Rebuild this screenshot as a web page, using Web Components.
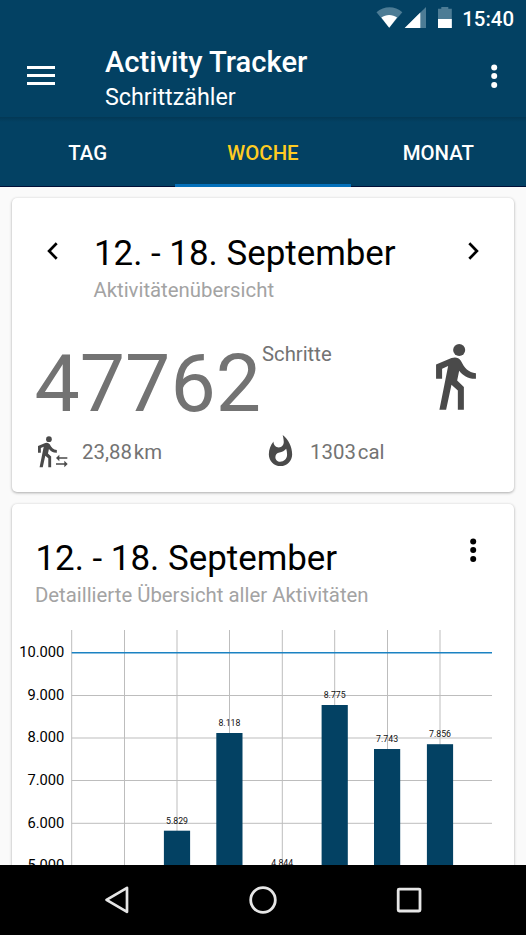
<!DOCTYPE html>
<html lang="de">
<head>
<meta charset="utf-8">
<title>Activity Tracker</title>
<style>
html,body{margin:0;height:100%;overflow:hidden}
body{font-family:Roboto,"Noto Sans",sans-serif;background:#fafafa}
</style>
</head>
<body>
<activity-app></activity-app>
<script>
const define = (name, css, html) => customElements.define(name, class extends HTMLElement {
  connectedCallback() {
    if (this.shadowRoot) return;
    const t = document.createElement('template');
    t.innerHTML = `<style>*{box-sizing:border-box}svg{display:block}${css}</style>${typeof html === 'function' ? html(this) : html}`;
    this.attachShadow({mode: 'open'}).append(t.content.cloneNode(true));
  }
});

define('status-bar', `:host{display:flex;justify-content:flex-end;height:36px;padding:0 12px 0 0;align-items:flex-start;color:#fff}
svg{flex:none}span{font:500 20.4px/24px Roboto,sans-serif;margin:6.5px 0 0 9px}`,
`<svg width="77" height="36" viewBox="0 0 77 36">
<path d="M0.5 12.3C8 5.6 19 5.6 26.3 12.3L13.2 27.7Z" fill="#4d7c95"/>
<path d="M5.3 17.5C9.8 14 16.6 14 21.1 17.5L13.2 27.7Z" fill="#fff"/>
<path d="M28.7 28L50 7V28Z" fill="#4d7c95"/><path d="M28.7 28L44.3 12.6V28Z" fill="#fff"/>
<path d="M62 8.7h3.3V7h7v1.7h3.5V28H62Z" fill="#4d7c95"/><path d="M62 19h13.8v9H62Z" fill="#fff"/></svg><span>15:40</span>`);

define('more-icon', `:host{display:block;width:8px;height:26px}`,
`<svg width="8" height="26" fill="currentColor"><circle cx="4.2" cy="4.4" r="3"/><circle cx="4.2" cy="13.1" r="3"/><circle cx="4.2" cy="21.9" r="3"/></svg>`);

define('tool-bar', `:host{display:flex;height:81px;padding:8px 28px 0 27px;color:#fff;align-items:flex-start}
.menu{margin-top:22px;flex:none}.t{margin-left:50px;flex:1}
h1{margin:0;font-weight:500;font-size:29.15px;line-height:36px;white-space:nowrap}
p{margin:4px 0 0;font-size:23.3px;line-height:26px}more-icon{margin-top:19px}`,
`<svg class="menu" width="28" height="20" fill="#fff"><path d="M0 0h28v3H0zM0 8h28v3H0zM0 16h28v3H0z"/></svg>
<div class="t"><h1><slot name="title"></slot></h1><p><slot name="subtitle"></slot></p></div><more-icon></more-icon>`);

define('tab-item', `:host{display:flex;align-items:center;justify-content:center;flex:1;height:70px;padding-top:3px;color:#fff;font-weight:500;font-size:20.4px;line-height:24px;border-bottom:1px solid #001038}
:host([selected]){color:#fc2;border-bottom:3px solid #0470ba;padding-top:5px}`, `<slot></slot>`);

define('tab-strip', `:host{display:flex;height:70px;background:linear-gradient(#033855,#034163 5px)}`, `<slot></slot>`);

define('info-card', `:host{display:block;background:#fff;border-radius:5px;box-shadow:0 1px 3px rgba(0,0,0,.3),0 0 3px rgba(0,0,0,.05)}`, `<slot></slot>`);

define('card-heading', `:host{display:block;flex:1}
h2{margin:0;padding-top:1px;font-weight:400;font-size:34.9px;line-height:42px;color:#000;white-space:nowrap}
p{margin:3px 0 0 -.6px;font-size:20.35px;line-height:24px;color:#a3a3a3;white-space:nowrap}`,
`<h2><slot name="title"></slot></h2><p><slot name="subtitle"></slot></p>`);

define('chevron-icon', `:host{display:block;width:11px;height:18px}:host([right]){transform:scaleX(-1)}`,
`<svg width="11" height="18"><path d="M9.7 1.2L2.1 9L9.7 16.8" fill="none" stroke="#000" stroke-width="2.7"/></svg>`);

const walker = `<circle cx="588" cy="390" r="18"/><path d="M519 433L565 414Q583 408 593 422C604 444 615 457 638 459V476C615 477 599 466 588 452L582 481L602 500V568H584V511L565 494L549 568H529L555 438L537 446V476H519Z"/>`;
define('walk-icon', `:host{display:block}`, `<svg width="40" height="66" viewBox="519 372 119 197" fill="#4a4a4a">${walker}</svg>`);
define('distance-icon', `:host{display:block}`, `<svg width="31" height="32" viewBox="0 0 93 96" fill="#4a4a4a"><g transform="scale(.475) translate(-519 -370)">${walker}</g>
<path d="M54 66L64 56V63.5H88V68.5H64V76ZM89 84L79 74V81.5H54V86.5H79V94Z"/></svg>`);
define('flame-icon', `:host{display:block}`, `<svg width="35" height="35" viewBox="0 0 24 24" fill="#4a4a4a"><path d="M13.5.67s.74 2.65.74 4.8c0 2.06-1.35 3.73-3.41 3.73-2.07 0-3.63-1.67-3.63-3.73l.03-.36C5.21 7.51 4 10.62 4 14c0 4.42 3.58 8 8 8s8-3.58 8-8C20 8.61 17.41 3.8 13.5.67zM11.71 19c-1.78 0-3.22-1.4-3.22-3.14 0-1.62 1.05-2.76 2.81-3.12 1.77-.36 3.6-1.21 4.62-2.58.39 1.29.59 2.65.59 4.04 0 2.65-2.15 4.8-4.8 4.8z"/></svg>`);

define('week-summary', `:host{display:block;height:294px;color:#737373}
.head{display:flex;padding:34px 35px 0}.head card-heading{margin-left:36px}chevron-icon{margin-top:10px}
.steps{display:flex;padding:35px 38px 0 22.5px;height:128px}
b{font-weight:400;font-size:80.6px;line-height:94px;margin-top:0}
.unit{font-size:20.3px;line-height:24px;margin:5px 0 0 1px;flex:1}walk-icon{margin-top:7px}
.stats{display:grid;grid-template-columns:44px 181px 47px 1fr;padding:0 26px;font-size:20.4px;line-height:24px}
.stats span{margin-top:10px;white-space:nowrap}i{font-style:normal;margin-left:2px}
distance-icon{margin-top:6px}flame-icon{margin-top:4px}`,
`<div class="head"><chevron-icon></chevron-icon><card-heading><span slot="title">12. - 18. September</span><span slot="subtitle">Aktivitätenübersicht</span></card-heading><chevron-icon right></chevron-icon></div>
<div class="steps"><b>47762</b><span class="unit">Schritte</span><walk-icon></walk-icon></div>
<div class="stats"><distance-icon></distance-icon><span>23,88<i>km</i></span><flame-icon></flame-icon><span>1303<i>cal</i></span></div>`);

define('step-chart', `:host{display:block}svg{font-family:Roboto,sans-serif}`, () => {
  // Chart coordinates: card origin at x = 12, plot top at y = 630.
  let s = '<svg width="502" height="260" viewBox="12 630 502 260">';
  [71.7,124.5,177,229.5,282.3,334.7,387.5,440].forEach(x => s += `<path d="M${x} 630V890" stroke="#bdbdbd"/>`);
  [[652.8,'10.000'],[695.5,'9.000'],[738,'8.000'],[780.5,'7.000'],[823.3,'6.000'],[866,'5.000']].forEach(([y,t],i) => {
    s += `<path d="M71.7 ${y}H492" stroke="${i ? '#bdbdbd' : '#1b82c2'}" stroke-width="${i ? 1 : 1.4}"/><text x="64.3" y="${y+4.3}" font-size="14.7" text-anchor="end">${t}</text>`;
  });
  [[177,830.7,'5.829'],[229.4,733,'8.118'],[282.2,873,'4.844'],[334.7,705,'8.775'],[387.1,749,'7.743'],[440,744.2,'7.856']].forEach(([x,y,t]) =>
    s += `<rect x="${x-13.1}" y="${y}" width="26.2" height="${890-y}" fill="#034163"/><text x="${x}" y="${y-6.8}" font-size="8.76" text-anchor="middle" fill="#111">${t}</text>`);
  return s + '</svg>';
});

define('week-details', `:host{display:block}.head{display:flex;padding:33px 37px 0 23.5px}more-icon{margin-top:0}step-chart{margin-top:23px}`,
`<div class="head"><card-heading><span slot="title">12. - 18. September</span><span slot="subtitle">Detaillierte Übersicht aller Aktivitäten</span></card-heading><more-icon></more-icon></div><step-chart></step-chart>`);

define('nav-bar', `:host{display:grid;grid-template-columns:repeat(3,146px);justify-content:center;align-items:center;justify-items:center;height:70px;background:#000}`,
`<svg width="30" height="30"><path d="M25 3L4.5 15L25 27Z" transform="translate(0 -.2)" fill="none" stroke="#e6e6e6" stroke-width="2.7" stroke-linejoin="round"/></svg>
<svg width="30" height="30"><circle cx="15" cy="15" r="12.3" fill="none" stroke="#e6e6e6" stroke-width="2.8"/></svg>
<svg width="30" height="30"><rect x="4.2" y="4.2" width="21.8" height="21.8" rx="1" fill="none" stroke="#e6e6e6" stroke-width="2.8"/></svg>`);

define('activity-app', `:host{display:flex;flex-direction:column;height:935px;width:526px;overflow:hidden}
header{background:#034163;height:117px;flex:none}tab-strip,nav-bar{flex:none}
main{flex:1;min-height:0;overflow:hidden;display:flex;flex-direction:column;gap:12px;padding:11px 12px 0}info-card{flex:none}`,
`<header><status-bar></status-bar><tool-bar><span slot="title">Activity Tracker</span><span slot="subtitle">Schrittzähler</span></tool-bar></header>
<tab-strip><tab-item>TAG</tab-item><tab-item selected>WOCHE</tab-item><tab-item>MONAT</tab-item></tab-strip>
<main><info-card><week-summary></week-summary></info-card><info-card><week-details></week-details></info-card></main><nav-bar></nav-bar>`);
</script>
</body>
</html>
